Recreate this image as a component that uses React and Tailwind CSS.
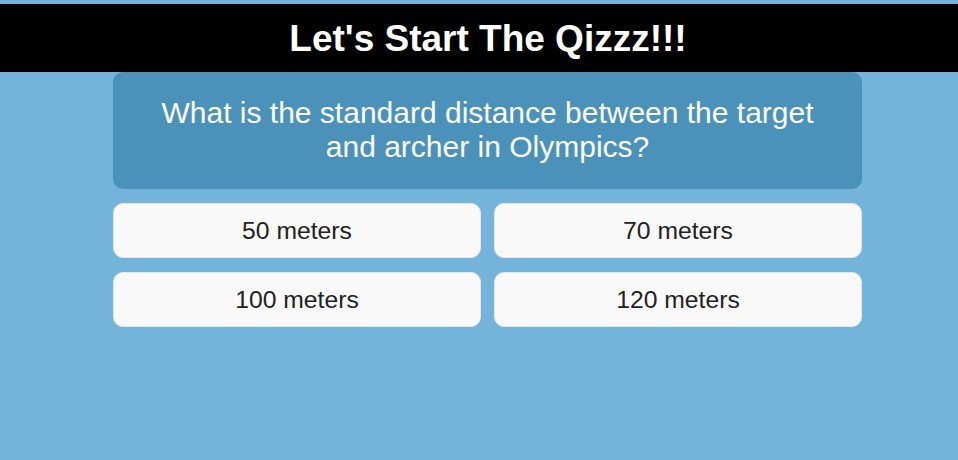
export default function App() {
  const answers = ['50 meters', '70 meters', '100 meters', '120 meters'];

  return (
    <div className="min-h-[460px] bg-[#74b4da] pt-[4px] font-['Liberation_Sans',Arial,sans-serif]">
      {/* Header */}
      <header className="flex h-[68px] items-center justify-center bg-black pl-[18px]">
        <h1 className="text-[37px] font-bold leading-none text-white">Let's Start The Qizzz!!!</h1>
      </header>

      <main className="ml-[113px] w-[749px]">
        {/* Question */}
        <div className="rounded-[10px] bg-[#4a92b9] px-6 pt-[24px] pb-[25px] text-center">
          <p className="text-[30px] leading-[34px] text-white">
            What is the standard distance between the target
            <br />
            and archer in Olympics?
          </p>
        </div>

        {/* Answers */}
        <div className="mt-[14px] grid grid-cols-2 gap-x-[13px] gap-y-[14px]">
          {answers.map((a) => (
            <button
              key={a}
              className="flex h-[55px] items-center justify-center rounded-[10px] border border-[#e6e6e6] bg-[#f9f9f9] text-[24.7px] text-[#222]"
            >
              {a}
            </button>
          ))}
        </div>
      </main>
    </div>
  );
}
